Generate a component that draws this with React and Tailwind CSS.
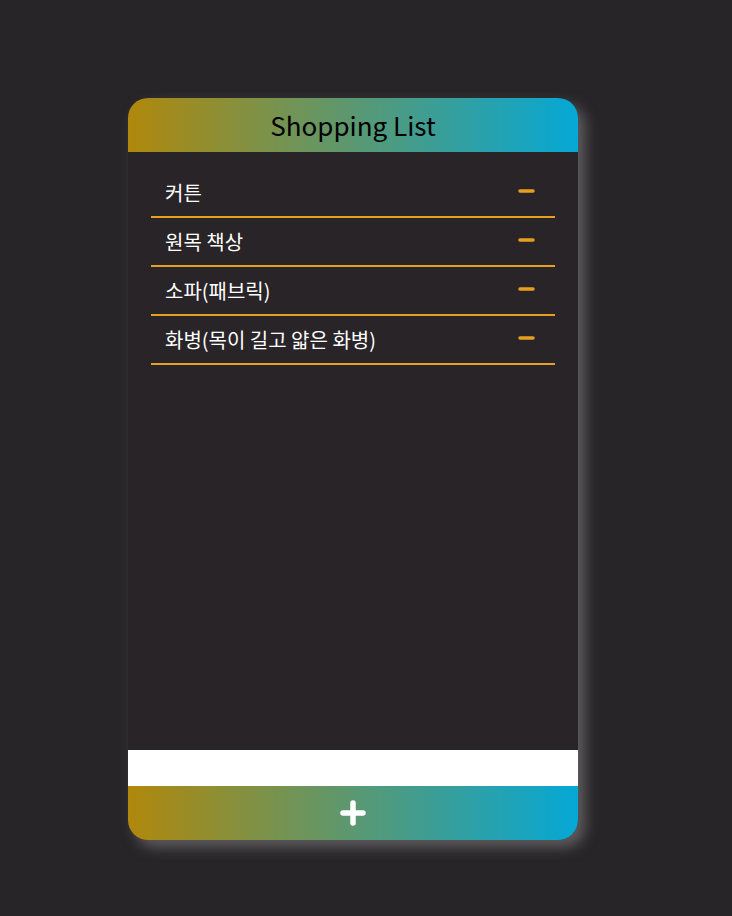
const items = ["커튼", "원목 책상", "소파(패브릭)", "화병(목이 길고 얇은 화병)"];

function MinusIcon() {
  return (
    <svg width="17" height="6" viewBox="0 0 17 6" className="shrink-0 -mt-[3px]">
      <line x1="2" y1="3" x2="15" y2="3" stroke="#e5a01f" strokeWidth="3.5" strokeLinecap="round" />
    </svg>
  );
}

function PlusIcon() {
  return (
    <svg width="26" height="26" viewBox="0 0 26 26">
      <g stroke="#fff" strokeWidth="5.5" strokeLinecap="round">
        <line x1="13" y1="3" x2="13" y2="23" />
        <line x1="3" y1="13" x2="23" y2="13" />
      </g>
    </svg>
  );
}

export default function App() {
  return (
    <div
      className="min-h-[916px] bg-[#282528] pt-[98px] pl-[128px]"
      style={{ fontFamily: '"Noto Sans CJK KR", "Noto Sans", sans-serif' }}
    >
      <div className="w-[450px] h-[742px] rounded-[20px] bg-[#282428] flex flex-col overflow-hidden shadow-[7px_7px_14px_rgba(150,150,150,0.5)]">
        <div className="h-[54px] shrink-0 bg-[linear-gradient(to_right,#b0880c,#05a8d6)] flex items-center justify-center">
          <h1 className="text-[26px] text-black leading-none">Shopping List</h1>
        </div>

        <ul className="flex-1 px-[23px] pt-[17px]">
          {items.map((item) => (
            <li
              key={item}
              className="h-[49px] border-b-2 border-[#e5a01f] flex items-center justify-between pl-[14px] pr-[20px]"
            >
              <span className="text-[20px] text-white">{item}</span>
              <MinusIcon />
            </li>
          ))}
        </ul>

        <input className="h-[36px] shrink-0 bg-white outline-none px-3" />

        <div className="h-[54px] shrink-0 bg-[linear-gradient(to_right,#b0880c,#05a8d6)] flex items-center justify-center">
          <PlusIcon />
        </div>
      </div>
    </div>
  );
}
